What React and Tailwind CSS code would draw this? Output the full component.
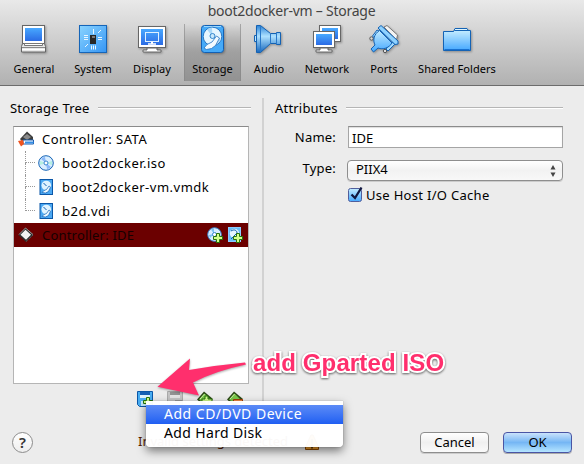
import React from "react";

const Defs = () => (
  <svg className="absolute h-0 w-0" aria-hidden="true">
    <defs>
      <linearGradient id="blue" x1="0" y1="0" x2="0" y2="1">
        <stop offset="0" stopColor="#48a8ff" /><stop offset="1" stopColor="#2b6be4" />
      </linearGradient>
      <linearGradient id="sky" x1="0" y1="0" x2="1" y2="1">
        <stop offset="0" stopColor="#8ad4ff" /><stop offset="1" stopColor="#3595f4" />
      </linearGradient>
      <linearGradient id="light" x1="0" y1="0" x2="0" y2="1">
        <stop offset="0" stopColor="#c4ecff" /><stop offset="1" stopColor="#45a8ff" />
      </linearGradient>
      <linearGradient id="horn" x1="0" y1="0" x2="0" y2="1">
        <stop offset="0" stopColor="#2a83d8" /><stop offset=".4" stopColor="#aee1ff" /><stop offset="1" stopColor="#1767bd" />
      </linearGradient>
    </defs>
  </svg>
);

const Big = ({ children }) => (
  <svg width="30" height="30" viewBox="0 0 30 30" className="block drop-shadow-[1px_1px_1px_rgba(0,0,0,0.3)]">{children}</svg>
);

const GeneralIcon = () => (
  <Big>
    <rect x="3.5" y="1.5" width="22" height="19" fill="#fff" stroke="#666" />
    <rect x="6" y="4" width="17" height="13" fill="url(#blue)" />
    <path d="M3.5 19.500h22l1 3v5.500h-24v-5.500z" fill="#e8e8e8" stroke="#666" />
    <path d="M5.500 19.500h18v2h-18z" fill="#fff" stroke="#777" />
    <path d="M3 23.500h23" stroke="#888" />
    <path d="M3 25.500h23" stroke="#fff" />
  </Big>
);
const SystemIcon = () => (
  <Big>
    <rect x="1.500" y="1.500" width="27" height="27" fill="url(#sky)" stroke="#1565b8" />
    <rect x="12" y="11" width="6" height="9" fill="#272727" />
    <path d="M14 12h3v2h-3z" fill="#777" />
    <path d="M15.500 5v5M6 11.500h4M6 13.500h4M6 15.500h4M20 13.500h4M20 15.500h4M13.500 21.500v4M15.500 21.500v4M17.500 21.500v4M20 9l3-3M7 23l3-3" stroke="#e8f6ff" />
  </Big>
);
const DisplayIcon = () => (
  <Big>
    <path d="M10 24h10v2h4v2H6v-2h4z" fill="#fff" stroke="#666" />
    <rect x="1.500" y="2.500" width="27" height="21" fill="#fff" stroke="#666" />
    <rect x="4" y="5" width="22" height="16" fill="url(#blue)" />
    <rect x="8.500" y="8.500" width="13" height="9" fill="none" stroke="#dff1ff" />
    <path d="M11 20h8M14 18.500h2" stroke="#fff" strokeWidth="1.500" />
  </Big>
);
const DiskIcon = () => (
  <Big>
    <rect x="3.500" y="1.500" width="22" height="27" rx="3" fill="#46aaf8" stroke="#1260b4" />
    <path d="M6 2.500h17" stroke="#9bd8ff" />
    <circle cx="14.500" cy="12.500" r="9.300" fill="#e6f6ff" stroke="#2a78c4" />
    <path d="M14.500 12.500L9 5.500a9 9 0 0 1 5-2zM14.500 12.500l5 7a9 9 0 0 0 3.500-4.500z" fill="#a9d8f8" />
    <path d="M6 24l3-3.500 5-2.500 4.500-6 3 2-4 7.500-4 3-5 1z" fill="#f2faff" stroke="#2472c0" strokeWidth=".8" />
    <circle cx="14.500" cy="12" r="2.500" fill="#c8e8fb" stroke="#3385cc" />
  </Big>
);
const AudioIcon = () => (
  <Big>
    <path d="M2.500 11.500H.500v6h2" fill="#bce6ff" stroke="#1462b3" />
    <path d="M2.500 1.500h4l10 8h6V8.500h4v12h-4v-1h-6l-10 9h-4z" fill="url(#horn)" stroke="#1462b3" />
    <path d="M6.500 2v26M16.500 10v9M22.500 9v11" stroke="#2878c9" />
  </Big>
);
const NetworkIcon = () => (
  <Big>
    <rect x="7.500" y="1.500" width="21" height="16" fill="#fff" stroke="#666" />
    <rect x="10" y="4" width="16" height="11" fill="url(#blue)" />
    <path d="M8 24h8v2h4v2H4v-2h4z" fill="#fff" stroke="#666" />
    <rect x="1.500" y="7.500" width="21" height="16" fill="#fff" stroke="#666" />
    <rect x="4" y="10" width="16" height="11" fill="url(#blue)" />
  </Big>
);
const PortsIcon = () => (
  <Big>
    <path d="M15 3l3-1.500L28.500 11l-1 5z" fill="#f3f3f3" stroke="#777" />
    <circle cx="2.500" cy="14.500" r="1.700" fill="#ddd" stroke="#555" />
    <circle cx="16" cy="27" r="1.700" fill="#ddd" stroke="#555" />
    <path d="M8 6L3.500 12l2 2 6-6zM23 18l-6 7 2 2 7-7z" fill="#a6ddff" stroke="#1463b5" />
    <path d="M10.500 6.500C5 10 3.500 16 6 21l-4 4 2.500 3 4.500-4c5 2 11 0 14-5z" fill="url(#light)" stroke="#1463b5" />
    <path d="M9 4l3-2.500L29 17v3l-3 .500z" fill="#8fd2ff" stroke="#1463b5" />
  </Big>
);
const FolderIcon = () => (
  <Big>
    <path d="M11 8.500l2-4h12l2.500 4" fill="#def5ff" stroke="#1463b5" />
    <path d="M1.500 7.500h10l1-1h16v20h-27z" fill="url(#light)" stroke="#1463b5" />
    <path d="M2.500 25.500h25" stroke="#1872d2" />
  </Big>
);

const Small = ({ children, className = "" }) => (
  <svg width="16" height="16" viewBox="0 0 16 16" className={"block shrink-0 " + className}>{children}</svg>
);
const Plus = () => <path d="M9.500 6.500h3v3h3v3h-3v3h-3v-3h-3v-3h3z" fill="#d4ff8c" stroke="#26730a" />;
const SataIcon = () => (
  <Small>
    <path d="M2 8l7-7.500 6 5.500v3l-9 4z" fill="#3d3d3d" />
    <path d="M5 6l4-3 4 3-4 3z" fill="#8a8a8a" />
    <path d="M5 9h10.500v4H5z" fill="#fff" stroke="#1a5caf" />
    <path d="M7 11.500h8.500" stroke="#338ee6" strokeWidth="2" />
    <path d="M0 10l5-1 1 4-3 2.500z" fill="#ef531e" />
  </Small>
);
const DiscIcon = () => (
  <Small>
    <circle cx="8" cy="8" r="7.300" fill="#d9eeff" stroke="#1463b5" />
    <path d="M8 8L3 4a6 6 0 0 1 4-2zM8 8l5 4a6 6 0 0 1-4 2z" fill="#8ab8f8" />
    <path d="M8 8l6-2v4zM8 8l-6 2V6z" fill="#b6f0e0" />
    <circle cx="8" cy="8" r="2" fill="#fff" stroke="#3585d1" />
  </Small>
);
const HddIcon = () => (
  <Small>
    <rect x="2" y=".500" width="12.500" height="15" fill="#4ba8f2" stroke="#0b57a8" />
    <circle cx="8.300" cy="6.500" r="4.800" fill="#dff3ff" />
    <path d="M4 13.500l2-2 2.500-1 2.500-3.500 1.500 1-2 4.500-3 1.500z" fill="#eefaff" stroke="#1260b4" strokeWidth=".7" />
    <path d="M5.500 4l3 3" stroke="#1260b4" />
  </Small>
);
const IdeIcon = () => (
  <Small>
    <path d="M.500 8L7.500 1l8 7-7.500 7z" fill="#2c2c2c" />
    <path d="M1 7.500L7.500 1l7.500 6.500" fill="none" stroke="#999" />
    <path d="M2.500 7.700l5-5 5.500 5-5 5z" fill="#f1f1f1" />
    <path d="M8 14.500l7-6.500" stroke="#777" strokeDasharray="1 1" />
  </Small>
);
const AddDiscIcon = () => (
  <Small>
    <circle cx="7.500" cy="7.500" r="6.800" fill="#d9eeff" stroke="#3885cc" />
    <path d="M7 7L4 2.500l3-1zM7 7L3 11l-1-3z" fill="#7bc2f1" />
    <circle cx="7.500" cy="7.500" r="2" fill="#fff" stroke="#3585d1" />
    <Plus />
  </Small>
);
const AddHddIcon = () => (
  <Small>
    <rect x="1.500" y=".500" width="12" height="14" fill="#67bdf8" stroke="#8ccbff" />
    <circle cx="7.500" cy="6.500" r="4.700" fill="#e5f5ff" />
    <path d="M4 4c3-2 6-1 6 2l-6 6" fill="none" stroke="#1461b0" />
    <Plus />
  </Small>
);
const AddAttachmentIcon = () => (
  <Small>
    <path d="M.500.500h15v15H2.500l-2-2z" fill="#49aef2" stroke="#0b57a8" />
    <path d="M3 1h10v6H3z" fill="#dff3ff" />
    <path d="M3 1h10v3H3z" fill="#1660b4" />
    <path d="M4 10h8v5H4z" fill="#c3e8ff" />
    <Plus />
  </Small>
);
const RemoveAttachmentIcon = () => (
  <Small>
    <path d="M.500.500h15v15H2.500l-2-2z" fill="#c4c4c4" stroke="#aaa" />
    <path d="M3 1h10v3H3z" fill="#929292" />
    <path d="M3 4h10v3H3z" fill="#e4e4e4" />
    <path d="M4 10h8v5H4z" fill="#e3e3e3" />
    <path d="M8 9h7v3H8z" fill="#999" />
  </Small>
);
const ChipIcon = ({ remove }) => (
  <Small>
    <path d="M0 8.500L7 .500 16 8l-8 8z" fill="#2c4a16" />
    <path d="M2 8.500l5.500-6L13 8l-5 5z" fill="#79c749" />
    <path d="M3 8l4.500-5" stroke="#d0f5a8" />
    {remove ? <path d="M6.500 8.500h9v3h-9z" fill="#f58b42" stroke="#a33d06" /> : <path d="M8 5h3v3h4v3h-4v3H8v-3H5V8h3z" fill="#d4ff8c" stroke="#26730a" />}
  </Small>
);

const TOOLS = [
  ["General", GeneralIcon, "w-14"],
  ["System", SystemIcon, "w-[62px]"],
  ["Display", DisplayIcon, "w-14"],
  ["Storage", DiskIcon, "ml-1 w-[57px] border-x border-[#858585]/60 bg-linear-to-b from-transparent via-[#a0a0a0] to-[#929292]"],
  ["Audio", AudioIcon, "w-14"],
  ["Network", NetworkIcon, "w-[60px]"],
  ["Ports", PortsIcon, "w-[54px]"],
  ["Shared Folders", FolderIcon, "w-[92px]"],
];

const Toolbar = () => (
  <header className="h-[86px] shrink-0 border-b border-[#6c6c6c] bg-linear-to-b from-[#e9e9e9] to-[#b1b1b1]">
    <h1 className="h-6 pt-px pr-px text-center text-[14px] leading-[20px] tracking-[-0.25px] text-[#444]">boot2docker-vm – Storage</h1>
    <nav className="flex pl-1.5">
      {TOOLS.map(([label, Icon, width]) => (
        <div key={label} className={"flex h-[57px] flex-col items-center " + width}>
          <Icon />
          <span className="mt-[7px] whitespace-nowrap text-[11px] leading-4 tracking-[0.05px]">{label}</span>
        </div>
      ))}
    </nav>
  </header>
);

const Heading = ({ children }) => (
  <div className="flex h-5 items-center gap-2">
    <h2 className="whitespace-nowrap text-[13px] leading-5 tracking-[0.2px]">{children}</h2>
    <div className="h-0.5 flex-1 border-t border-[#b5b5b5] bg-white" />
  </div>
);

const Leaf = ({ icon, children, last }) => (
  <div className="flex h-6 items-center pl-[11px]">
    <div className="flex h-6 w-[10px] flex-col">
      <div className="h-3 border-b border-l border-dotted border-[#999]" />
      {!last && <div className="h-3 border-l border-dotted border-[#999]" />}
    </div>
    <div className="ml-[3px]">{icon}</div>
    <span className="ml-2 pt-0.5">{children}</span>
  </div>
);

const StorageTree = () => (
  <section className="w-[251px] pl-[10px]">
    <Heading>Storage Tree</Heading>
    <div className="mt-2 ml-[3px] h-[258px] w-[236px] border border-[#b5b5b5] border-t-[#8b8b8b] bg-white text-[13px] tracking-[0.5px]">
      <div className="flex h-6 items-center gap-2 pl-1"><SataIcon /><span className="pt-0.5">Controller: SATA</span></div>
      <Leaf icon={<DiscIcon />}>boot2docker.iso</Leaf>
      <Leaf icon={<HddIcon />}>boot2docker-vm.vmdk</Leaf>
      <Leaf icon={<HddIcon />} last>b2d.vdi</Leaf>
      <div className="flex h-6 items-center bg-[#6b0000] pl-1 pr-[5px]">
        <IdeIcon /><span className="ml-2 flex-1 pt-0.5 tracking-[0.2px] text-[#160000]">Controller: IDE</span>
        <div className="flex gap-1"><AddDiscIcon /><AddHddIcon /></div>
      </div>
    </div>
    <div className="mt-[7px] ml-[127px] flex gap-[14px]">
      <AddAttachmentIcon /><RemoveAttachmentIcon /><ChipIcon /><ChipIcon remove />
    </div>
  </section>
);

const Attributes = () => (
  <section className="ml-[11px] w-[288px]">
    <Heading>Attributes</Heading>
    <div className="mt-2 grid grid-cols-[61px_215px] gap-x-3 text-[13px]">
      <label className="text-right leading-[22px] tracking-[0.2px]">Name:</label>
      <div className="h-[22px] border border-[#a5a5a5] border-t-[#8b8b8b] bg-white pl-[3px] leading-[22px] shadow-[inset_0_1px_1px_#ddd]">IDE</div>
      <label className="mt-[11px] text-right leading-[18px] tracking-[0.2px]">Type:</label>
      <div className="-ml-px mt-3 flex h-[21px] items-center justify-between rounded-[4px] border border-[#8e8e8e] bg-linear-to-b from-white via-[#f2f2f2] to-[#f8f8f8] pl-2 pr-[6px] shadow-[0_1px_0_#ccc]">
        <span className="pb-0.5">PIIX4</span>
        <svg width="6" height="12" viewBox="0 0 6 12"><path d="M3 0l2.500 4.500h-5zM3 12l2.500-4.500h-5z" fill="#444" /></svg>
      </div>
      <div className="col-start-2 mt-1 flex items-center">
        <svg width="16" height="18" viewBox="0 0 16 18" className="mb-0.5 shrink-0">
          <rect x=".500" y="3.500" width="13" height="13" rx="2" fill="url(#light)" stroke="#505e9c" />
          <path d="M3.500 9.500l3.500 3.500L13.500 2.500" fill="none" stroke="#111740" strokeWidth="2.300" />
        </svg>
        <span className="ml-0.5 leading-[20px] tracking-[0.3px]">Use Host I/O Cache</span>
      </div>
    </div>
  </section>
);

const Footer = () => (
  <footer className="flex h-[46px] shrink-0 items-center pl-3 pr-3 pt-0.5 text-[13px]">
    <div className="flex h-[21px] w-[21px] items-center justify-center rounded-full border border-[#8c8c8c] bg-linear-to-b from-white to-[#eee] text-[15px] font-semibold leading-none text-[#333]">?</div>
    <div className="ml-[105px] flex flex-1 items-center text-[#582000]">
      <span className="w-[167px] whitespace-nowrap">Invalid settings detected</span>
      <svg width="14" height="16" viewBox="0 0 14 16"><path d="M.500 15.500V13L6 1h2l5.500 12v2.500z" fill="#f4a029" stroke="#8e4b05" /><path d="M7 5v7M7 13v1.500" stroke="#412000" strokeWidth="1.500" /></svg>
    </div>
    <button className="h-[21px] w-[69px] rounded-[4px] border border-[#8e8e8e] bg-linear-to-b from-white via-[#f0f0f0] to-[#fafafa] leading-none shadow-[0_1px_0_#ccc]">Cancel</button>
    <button className="ml-[14px] h-[21px] w-[69px] rounded-[4px] border border-[#4a55a4] bg-linear-to-b from-[#c9e2fb] via-[#75b6f4] to-[#b5e5ff] leading-none shadow-[0_1px_0_#aaa]">OK</button>
  </footer>
);

const Menu = () => (
  <div className="absolute left-[146px] top-[401px] h-[46px] w-[197px] rounded-b-[4px] bg-white/97 pt-1 text-[14px] leading-[18px] tracking-[0.5px] shadow-[0_4px_10px_rgba(0,0,0,0.5),0_0_1px_rgba(0,0,0,0.5)]">
    <div className="h-[19px] bg-linear-to-b from-[#5c8bf6] to-[#1f5ef2] pl-[18px] text-white">Add CD/DVD Device</div>
    <div className="h-[19px] pl-[18px] tracking-[0.35px]">Add Hard Disk</div>
  </div>
);

const Annotation = () => (
  <>
    <svg className="absolute left-[150px] top-[350px] drop-shadow-[0_1px_1px_rgba(0,0,0,0.35)]" width="105" height="52" viewBox="150 350 105 52">
      <path d="M157.500 386.700L190 358.500L189 370Q218 365 245 362.500L246 364.500Q215 371 193 382.500L199 395.500Z" fill="#ff2f6d" />
    </svg>
    <div className="absolute left-[253px] top-[349px] whitespace-nowrap font-['Liberation_Sans',Arial,sans-serif] text-[24px] font-bold leading-7 tracking-[0.12px] text-[#ff2f6d] [paint-order:stroke_fill] [-webkit-text-stroke:4px_white] drop-shadow-[0_1px_1px_rgba(0,0,0,0.6)]">add Gparted ISO</div>
  </>
);

export default function App() {
  return (
    <div className="relative flex h-[464px] w-[584px] flex-col overflow-hidden bg-[#ececec] font-['Noto_Sans','Open_Sans',sans-serif] text-black">
      <Defs />
      <Toolbar />
      <main className="flex min-h-0 flex-1 pt-3">
        <StorageTree />
        <div className="ml-[11px] h-[308px] w-[2px] bg-[#d2d2d2]" />
        <Attributes />
      </main>
      <Footer />
      <Annotation />
      <Menu />
    </div>
  );
}
